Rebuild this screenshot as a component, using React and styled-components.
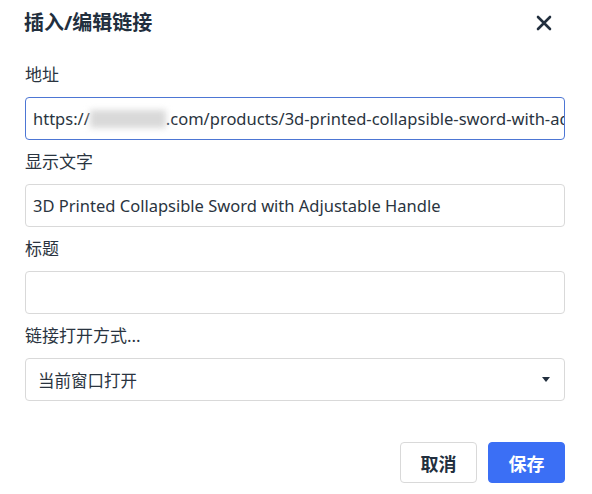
import React from 'react';
import styled, { createGlobalStyle } from 'styled-components';

const GlobalStyle = createGlobalStyle`
  html, body {
    margin: 0;
    padding: 0;
    background: #fff;
  }
  * {
    box-sizing: border-box;
  }
`;

const FONT = `"Noto Sans", "Noto Sans CJK SC", sans-serif`;

const Dialog = styled.div`
  width: 592px;
  height: 494px;
  padding: 0 27px 0 25px;
  background: #fff;
  font-family: ${FONT};
  color: #222f3e;
`;

const Header = styled.div`
  height: 53px;
  padding-top: 10px;
  display: flex;
  justify-content: space-between;
  align-items: flex-start;
`;

const Title = styled.div`
  font-size: 20px;
  line-height: 26px;
  font-weight: 700;
  margin-left: -1px;
`;

const CloseButton = styled.button`
  width: 26px;
  height: 26px;
  margin-right: 8px;
  padding: 0;
  border: none;
  background: none;
  display: flex;
  align-items: center;
  justify-content: center;
  color: #222f3e;
  cursor: pointer;
`;

const Label = styled.div`
  font-size: 17px;
  line-height: 24px;
  margin: 10px 0;
  color: #2a3440;
`;

const Field = styled.div`
  height: 43px;
  border: 1px solid ${props => (props.focused ? '#4d76d4' : '#d9d9d9')};
  border-radius: 4px;
  padding: 0 ${props => (props.select ? '12px' : '7px')};
  display: flex;
  align-items: center;
  justify-content: space-between;
  overflow: hidden;
  white-space: nowrap;
  font-size: 16.5px;
  color: #2a3440;
`;

const FieldText = styled.span`
  white-space: nowrap;
`;

const Blurred = styled.span`
  display: inline-block;
  width: 76px;
  height: 18px;
  vertical-align: -3px;
  background: #d9d9d9;
  filter: blur(3px);
`;

const Caret = styled.span`
  width: 0;
  height: 0;
  margin-right: 2px;
  border-left: 4px solid transparent;
  border-right: 4px solid transparent;
  border-top: 5px solid #222f3e;
`;

const Footer = styled.div`
  display: flex;
  justify-content: flex-end;
  gap: 11px;
  margin-top: 41px;
`;

const Button = styled.button`
  width: 77px;
  height: 41px;
  border-radius: 4px;
  border: 1px solid ${props => (props.primary ? '#3b6ff5' : '#d9d9d9')};
  background: ${props => (props.primary ? '#3b6ff5' : '#fff')};
  color: ${props => (props.primary ? '#fff' : '#222f3e')};
  font-family: ${FONT};
  font-size: 18px;
  font-weight: 700;
  cursor: pointer;
`;

const fields = [
  {
    label: '地址',
    focused: true,
    value: (
      <>
        https://<Blurred />.com/products/3d-printed-collapsible-sword-with-adjustable-handle
      </>
    ),
  },
  { label: '显示文字', value: '3D Printed Collapsible Sword with Adjustable Handle' },
  { label: '标题', value: '' },
];

export default function App() {
  return (
    <>
      <GlobalStyle />
      <Dialog>
        <Header>
          <Title>插入/编辑链接</Title>
          <CloseButton aria-label="关闭">
            <svg width="16" height="16" viewBox="0 0 16 16">
              <path
                d="M2 2 L14 14 M14 2 L2 14"
                stroke="currentColor"
                strokeWidth="2.6"
                strokeLinecap="round"
              />
            </svg>
          </CloseButton>
        </Header>
        {fields.map(f => (
          <div key={f.label}>
            <Label>{f.label}</Label>
            <Field focused={f.focused}>
              <FieldText>{f.value}</FieldText>
            </Field>
          </div>
        ))}
        <Label>链接打开方式...</Label>
        <Field select>
          <FieldText>当前窗口打开</FieldText>
          <Caret />
        </Field>
        <Footer>
          <Button>取消</Button>
          <Button primary>保存</Button>
        </Footer>
      </Dialog>
    </>
  );
}
